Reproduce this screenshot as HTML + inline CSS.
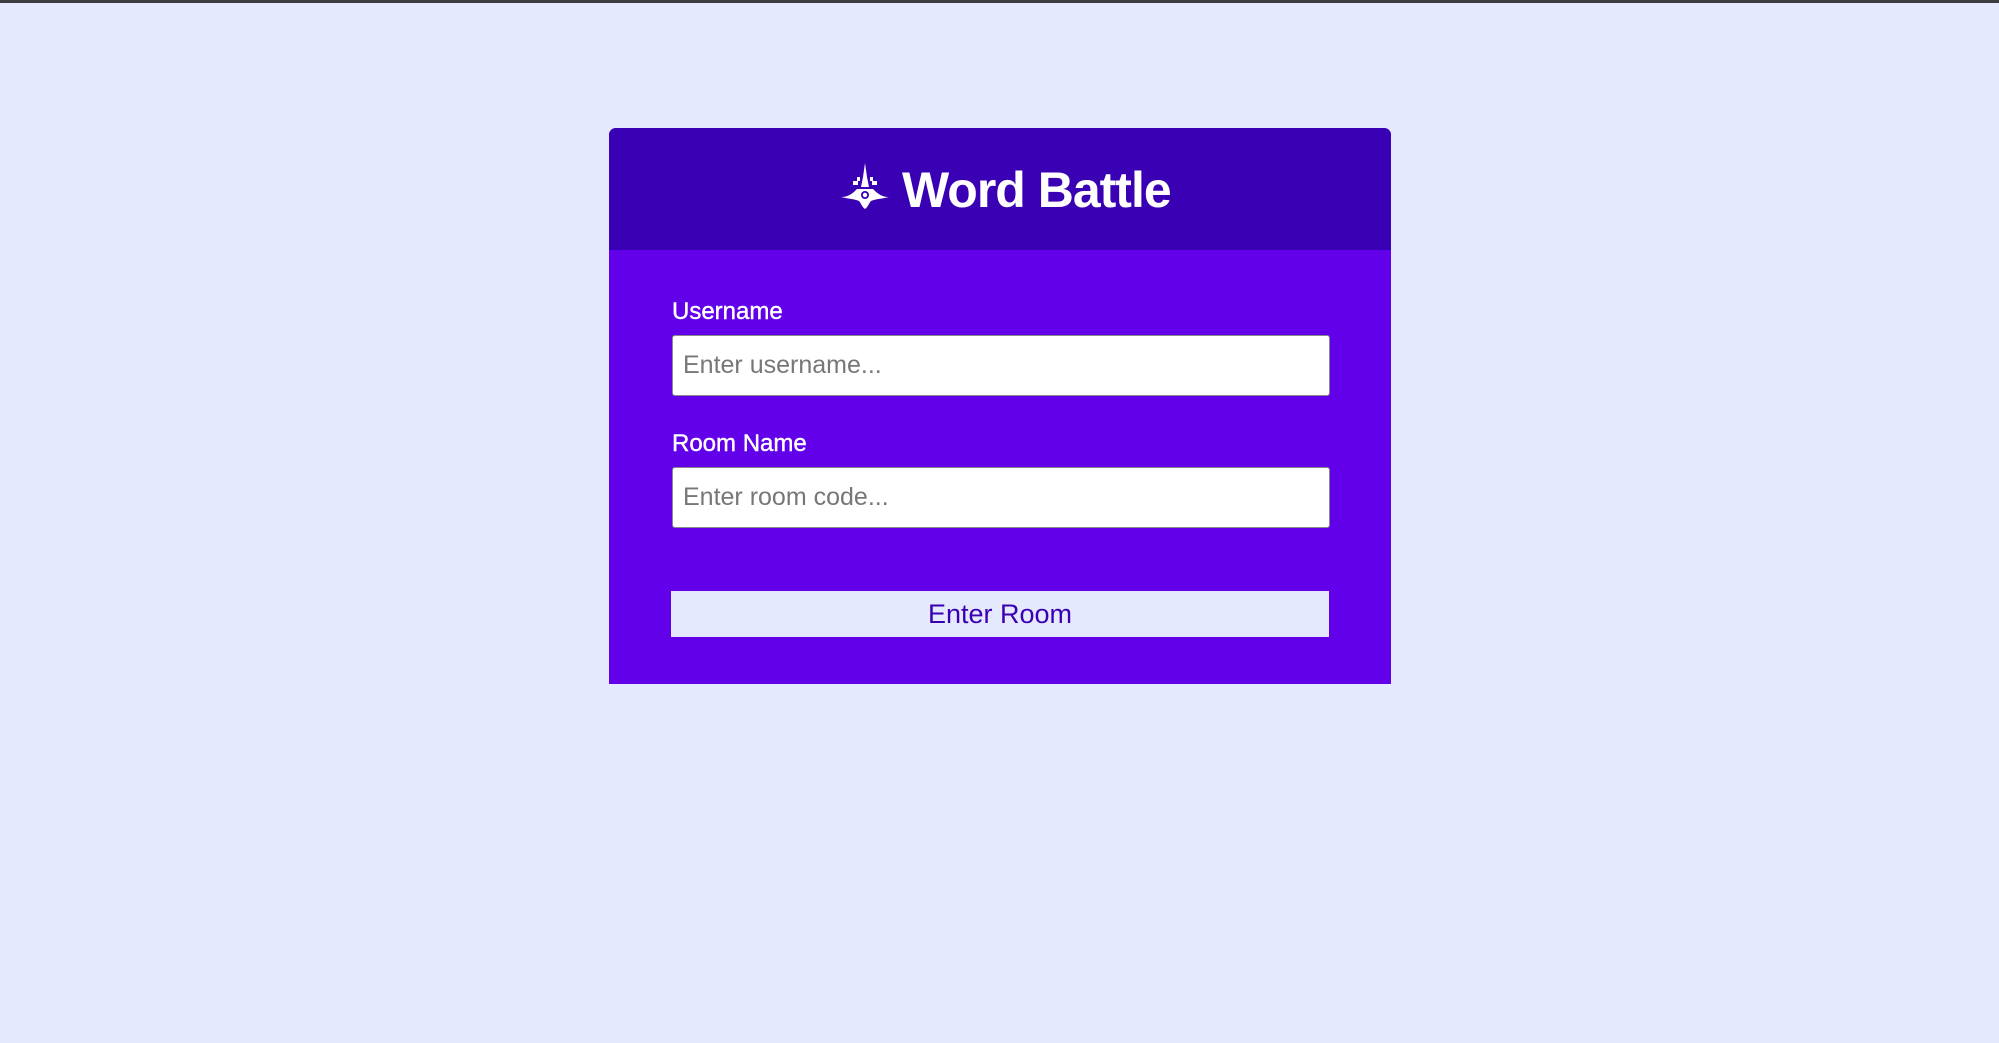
<!DOCTYPE html>
<html><head><meta charset="utf-8"><style>
html,body{margin:0;padding:0}
body{width:1999px;height:1043px;background:#e4e9fd;position:relative;overflow:hidden;font-family:"Liberation Sans",sans-serif}
.top{position:absolute;left:0;top:0;width:1999px;height:3px;background:#3c3c3c}
.card{position:absolute;left:609px;top:128px;width:782px;height:556px;background:#6200ea;border-radius:7px 7px 0 0;overflow:hidden}
.hdr{height:122px;background:#3a00b4;position:relative}
.title{position:absolute;left:293px;top:30px;color:#fff;font-size:50px;font-weight:bold;line-height:64px;letter-spacing:-1px}
.icon{position:absolute;left:230px;top:35px}
.lbl{position:absolute;left:63px;color:#fff;font-size:24px;-webkit-text-stroke:0.4px #fff}
.inp{position:absolute;left:63px;width:658px;height:61px;background:#fff;border:1px solid #8a8a8a;border-radius:3px;box-sizing:border-box;color:#777;font-size:25px;line-height:59px;padding-left:10px}
.btn{position:absolute;left:62px;top:463px;width:658px;height:46px;background:#e4e9fd;color:#3a00b4;font-size:27px;line-height:46px;text-align:center}
</style></head><body>
<div class="top"></div>
<div class="card">
 <div class="hdr">
  <svg class="icon" width="52" height="48" viewBox="0 0 52 48" fill="#fff">
   <path d="M26 0 L28 14 L30 24 L22 24 L24 14Z"/>
   <path d="M14 18 h5 v4 h-5z M33 18 h5 v4 h-5z M18 14 h3 v4 h-3z M31 14 h3 v4 h-3z"/>
   <path d="M2 34 C10 34 14 30 18 26 L34 26 C38 30 42 34 50 34 C42 36 36 36 32 38 C30 40 29 44 26 46 C23 44 22 40 20 38 C16 36 10 36 2 34Z"/>
   <circle cx="26" cy="32" r="4" fill="#3a00b4"/><circle cx="26" cy="32" r="2.2"/>
  </svg>
  <div class="title">Word Battle</div>
 </div>
 <div class="lbl" style="top:170px">Username</div>
 <div class="inp" style="top:207px">Enter username...</div>
 <div class="lbl" style="top:302px">Room Name</div>
 <div class="inp" style="top:339px">Enter room code...</div>
 <div class="btn">Enter Room</div>
</div>
</body></html>
